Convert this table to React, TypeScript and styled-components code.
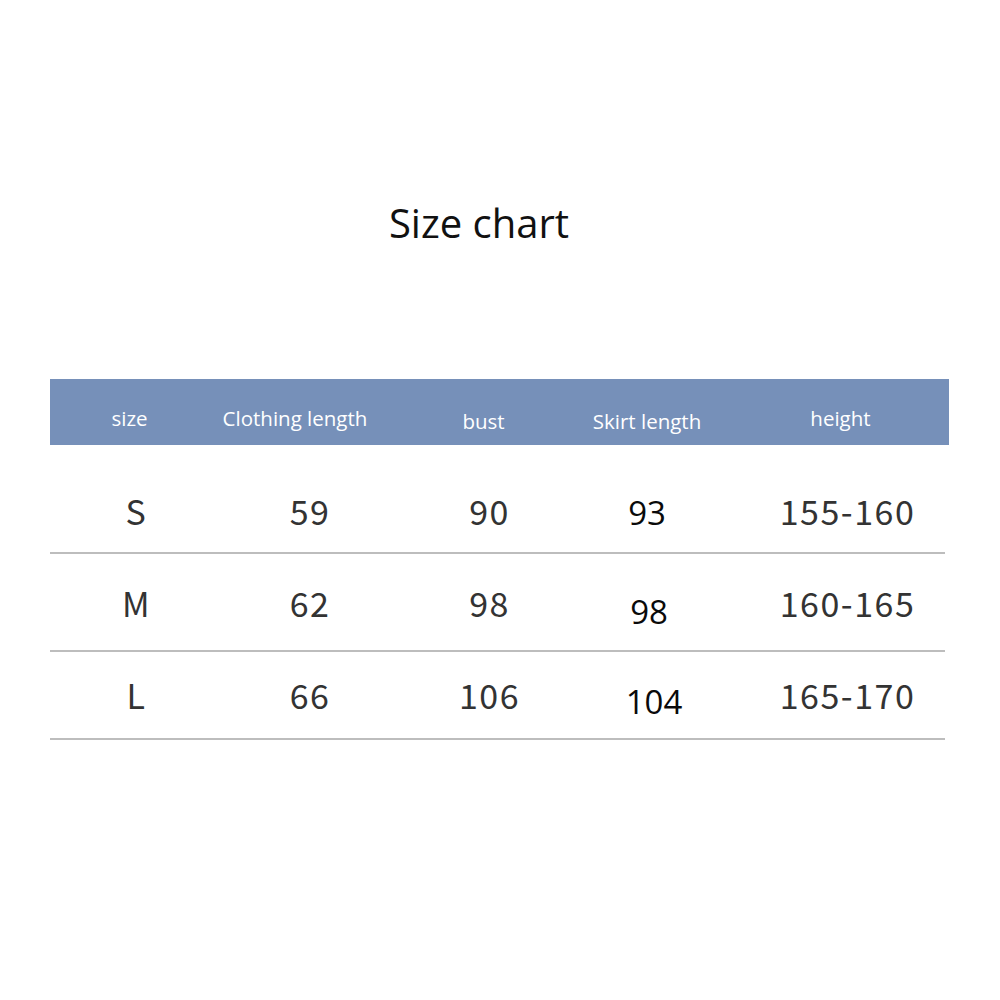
import React from "react";
import styled, { createGlobalStyle } from "styled-components";

const Global = createGlobalStyle`
  html, body { margin: 0; padding: 0; background: #fff; }
  body { width: 1000px; height: 1000px; overflow: hidden; }
`;

const Page = styled.div`
  width: 1000px;
  height: 1000px;
  background: #fff;
  display: flex;
  flex-direction: column;
  align-items: stretch;
`;

const Title = styled.h1`
  margin: 196px 0 129px;
  padding-right: 42px;
  text-align: center;
  font-family: "Open Sans", "Noto Sans", sans-serif;
  font-weight: 400;
  font-size: 40px;
  line-height: 54px;
  color: #111;
`;

const Table = styled.div`
  margin-left: 50px;
  width: 899px;
  display: flex;
  flex-direction: column;
`;

const cols = "169px 176px 171px 180px 203px";

const HeaderRow = styled.div`
  display: grid;
  grid-template-columns: ${cols};
  height: 66px;
  background: #7690b9;
  align-items: center;
`;

const HeadCell = styled.div<{ $dx?: number; $dy?: number }>`
  text-align: center;
  color: #fff;
  font-family: "Open Sans", "Noto Sans", sans-serif;
  font-size: 20.5px;
  line-height: 26px;
  white-space: nowrap;
  transform: translate(${(p) => p.$dx ?? 0}px, ${(p) => p.$dy ?? 0}px);
`;

const Row = styled.div<{ $h: number; $top: number }>`
  display: grid;
  grid-template-columns: ${cols};
  height: ${(p) => p.$h}px;
  padding-top: ${(p) => p.$top}px;
  box-sizing: border-box;
  width: 895px;
  border-bottom: 2px solid #bdbdbd;
  align-items: start;
`;

const Cell = styled.div<{ $dx?: number; $dy?: number; $bold?: boolean }>`
  text-align: center;
  white-space: nowrap;
  font-family: ${(p) =>
    p.$bold ? `"Open Sans", "Noto Sans", sans-serif` : `"Noto Sans CJK SC", "Noto Sans", sans-serif`};
  color: ${(p) => (p.$bold ? "#0a0a0a" : "#333")};
  font-size: ${(p) => (p.$bold ? 33 : 34)}px;
  letter-spacing: ${(p) => (p.$bold ? 0 : 1.5)}px;
  line-height: 40px;
  transform: translate(${(p) => p.$dx ?? 0}px, ${(p) => p.$dy ?? 0}px);
`;

const headers = [
  { t: "size", dx: -5, dy: 6 },
  { t: "Clothing length", dx: -12, dy: 6 },
  { t: "bust", dx: 3, dy: 9 },
  { t: "Skirt length", dx: -9, dy: 9 },
  { t: "height", dx: -7, dy: 6 },
];

const rows = [
  { h: 109, top: 46, cells: ["S", "59", "90", "93", "155-160"], skirtDy: 2, skirtDx: -9 },
  { h: 98, top: 29, cells: ["M", "62", "98", "98", "160-165"], skirtDy: 9, skirtDx: -7 },
  { h: 88, top: 23, cells: ["L", "66", "106", "104", "165-170"], skirtDy: 7, skirtDx: -2 },
];

export default function App() {
  return (
    <>
      <Global />
      <Page>
        <Title>Size chart</Title>
        <Table>
          <HeaderRow>
            {headers.map((h) => (
              <HeadCell key={h.t} $dx={h.dx} $dy={h.dy}>
                {h.t}
              </HeadCell>
            ))}
          </HeaderRow>
          {rows.map((r) => (
            <Row key={r.cells[0]} $h={r.h} $top={r.top}>
              <Cell $dx={2}>{r.cells[0]}</Cell>
              <Cell $dx={3}>{r.cells[1]}</Cell>
              <Cell $dx={9}>{r.cells[2]}</Cell>
              <Cell $bold $dx={r.skirtDx} $dy={r.skirtDy}>
                {r.cells[3]}
              </Cell>
              <Cell $dx={0}>{r.cells[4]}</Cell>
            </Row>
          ))}
        </Table>
      </Page>
    </>
  );
}
